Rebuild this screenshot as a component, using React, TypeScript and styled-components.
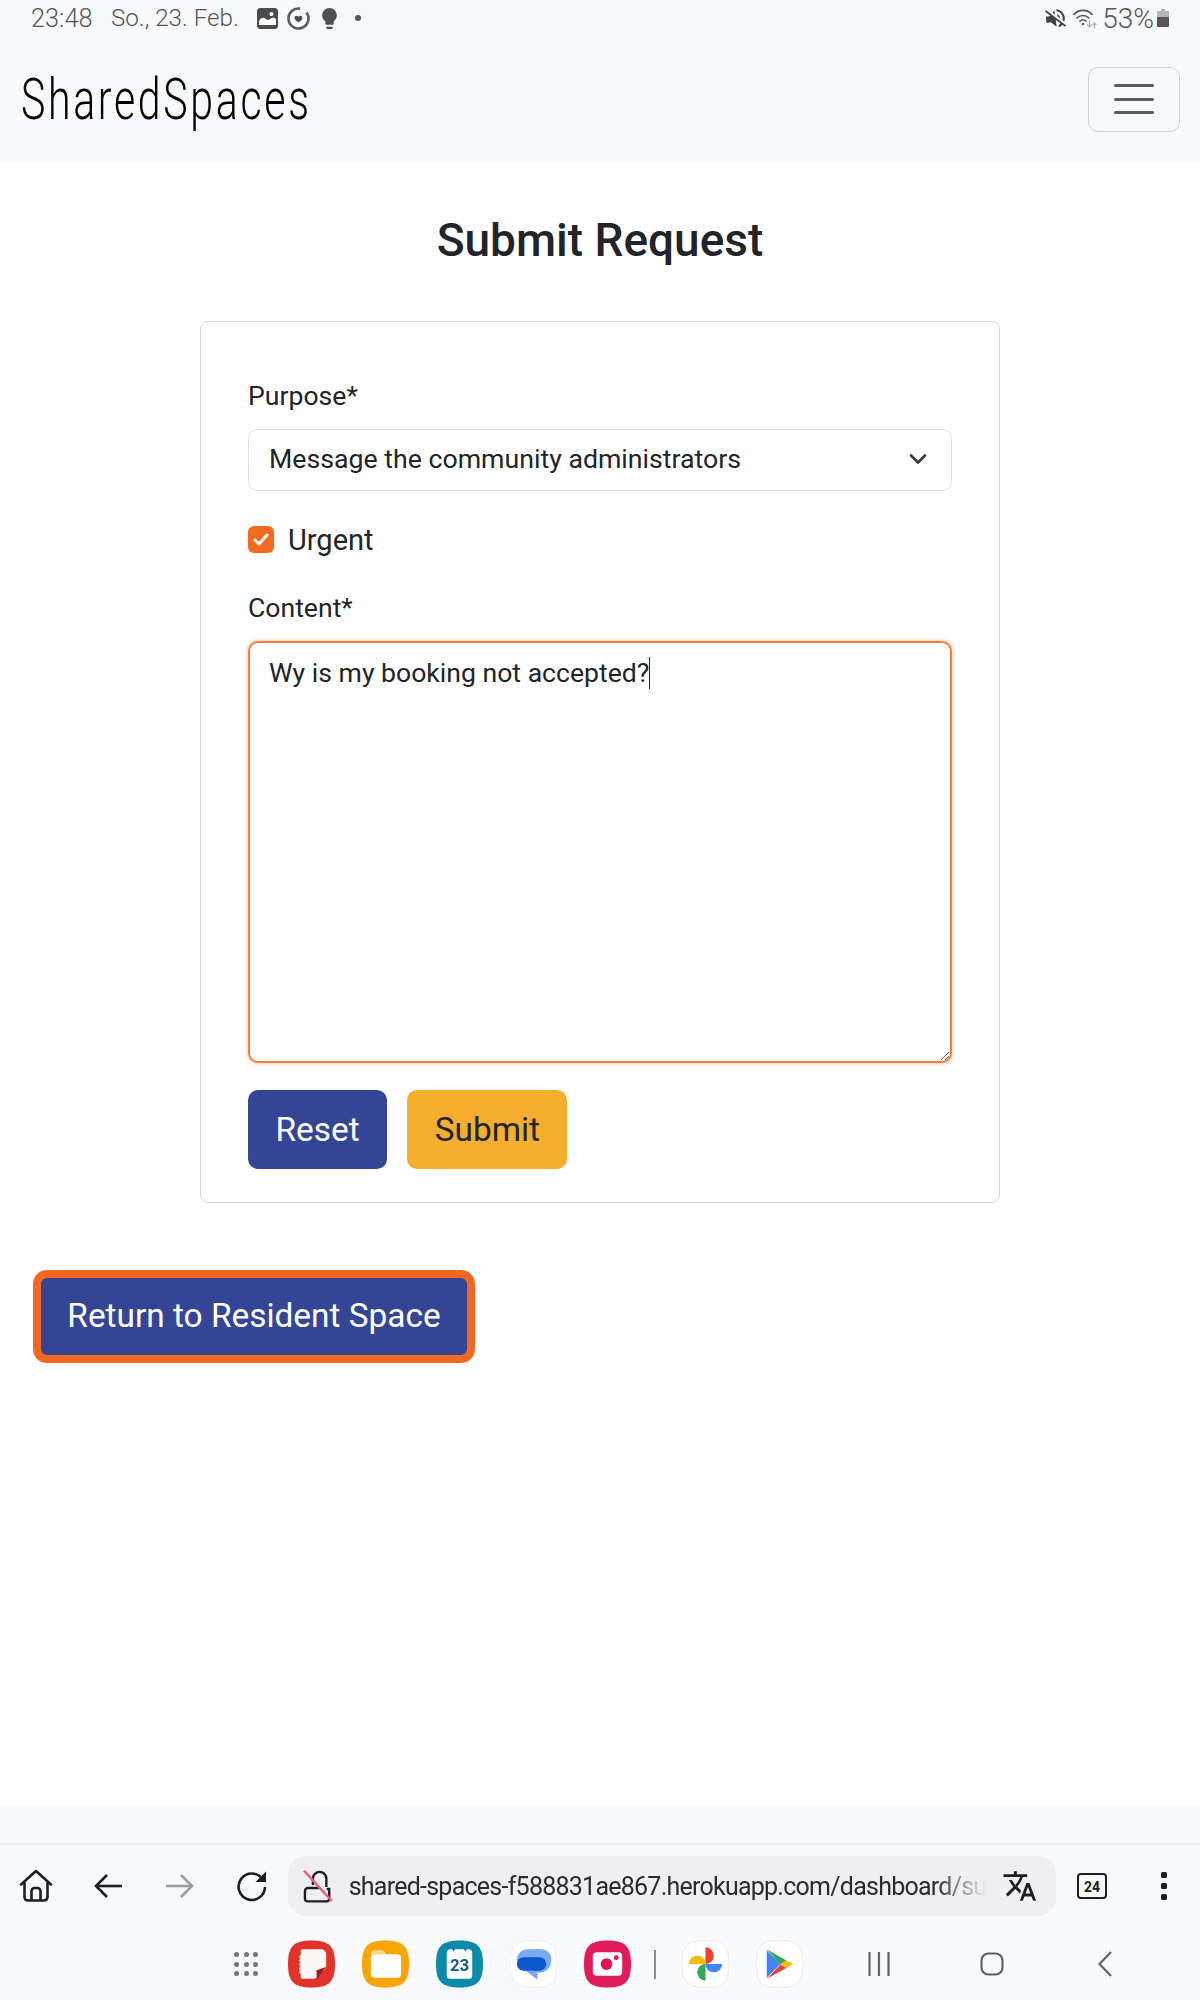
import React from "react";
import styled, { createGlobalStyle } from "styled-components";
import { MdTranslate, MdVolumeOff, MdLightbulb } from "react-icons/md";

const GlobalStyle = createGlobalStyle`
  html, body {
    margin: 0;
    padding: 0;
    background: #fff;
    font-family: Roboto, "Liberation Sans", sans-serif;
    color: #212529;
  }
  * { box-sizing: border-box; }
`;

const Page = styled.div`
  width: 1200px;
  height: 2000px;
  display: flex;
  flex-direction: column;
  overflow: hidden;
`;

const Header = styled.header`
  height: 163px;
  background: #f8f9fa;
  display: flex;
  flex-direction: column;
  flex: none;
`;

const StatusBar = styled.div`
  height: 36px;
  display: flex;
  align-items: center;
  justify-content: space-between;
  padding: 0 31px;
  color: #555657;
  font-weight: 300;
`;

const StatusGroup = styled.div`
  display: flex;
  align-items: center;
`;

const StatusText = styled.span<{ $size: number; $gap?: number }>`
  font-size: ${(p) => p.$size}px;
  margin-left: ${(p) => p.$gap ?? 0}px;
`;

const NotificationIcons = styled.div`
  display: flex;
  align-items: center;
  gap: 9px;
  margin-left: 18px;
`;

const BulbIcon = styled(MdLightbulb)`
  margin-left: -2px;
  color: #4f5051;
`;

const NotificationDot = styled.span`
  width: 6px;
  height: 6px;
  border-radius: 50%;
  background: #555657;
  margin-left: 4px;
`;

const MuteIcon = styled(MdVolumeOff)`
  color: #3f4041;
  transform: rotate(-8deg);
`;

const StatusSlot = styled.div<{ $gap: number }>`
  display: flex;
  margin-left: ${(p) => p.$gap}px;
`;

const NavRow = styled.div`
  flex: 1;
  display: flex;
  align-items: center;
  justify-content: space-between;
  padding: 0 20px 0 21px;
  margin-top: -1px;
`;

const Brand = styled.div`
  font-size: 57px;
  font-weight: 300;
  letter-spacing: 3.7px;
  line-height: 1;
  color: #000;
  transform: scaleX(0.72);
  transform-origin: left center;
  white-space: nowrap;
`;

const Toggler = styled.button`
  width: 92px;
  height: 65px;
  background: transparent;
  border: 1px solid #d1d2d3;
  border-radius: 10px;
  padding: 0;
  display: flex;
  flex-direction: column;
  align-items: center;
  justify-content: center;
  gap: 10.5px;
`;

const TogglerBar = styled.span`
  width: 40px;
  height: 3px;
  border-radius: 2px;
  background: #5a5c5e;
`;

const Main = styled.main`
  flex: 1;
  padding-top: 50px;
`;

const Title = styled.h1`
  margin: 0 0 53px;
  text-align: center;
  font-size: 46px;
  font-weight: 500;
  line-height: 55px;
`;

const Card = styled.form`
  width: 800px;
  height: 882px;
  margin: 0 auto;
  padding: 54px 47px 0;
  background: #fff;
  border: 1px solid #d6d8da;
  border-radius: 8px;
`;

const Label = styled.div`
  font-size: 26.6px;
  line-height: 39px;
  margin-bottom: 14px;
`;

const SelectBox = styled.div`
  height: 62px;
  padding: 0 24px 2px 20px;
  border: 1px solid #dee2e6;
  border-radius: 10px;
  display: flex;
  align-items: center;
  justify-content: space-between;
  font-size: 26.7px;
`;

const CheckRow = styled.div`
  display: flex;
  align-items: center;
  gap: 14px;
  margin: 29px 0 29px;
  height: 39px;
  font-size: 29px;
`;

const CheckBox = styled.span`
  width: 26px;
  height: 27px;
  border-radius: 6px;
  background: #f26b21;
  display: flex;
  align-items: center;
  justify-content: center;
`;

const ContentArea = styled.div`
  position: relative;
  height: 422px;
  padding: 10px 19px;
  border: 2px solid #f0803f;
  border-radius: 10px;
  box-shadow: 0 0 3px 1px rgba(242, 107, 33, 0.35);
  font-size: 26.6px;
  line-height: 39px;
`;

const Caret = styled.span`
  display: inline-block;
  width: 1px;
  height: 32px;
  background: #222;
  vertical-align: -7px;
`;

const ResizeGrip = styled.svg`
  position: absolute;
  right: 1px;
  bottom: 1px;
`;

const ButtonRow = styled.div`
  display: flex;
  gap: 20px;
  margin-top: 27px;
`;

const ActionButton = styled.button<{ $tone: "blue" | "amber" }>`
  height: 79px;
  padding: 0 27.5px;
  border: none;
  border-radius: 10px;
  font-family: inherit;
  font-size: 33.4px;
  background: ${(p) => (p.$tone === "blue" ? "#344596" : "#f5ae2d")};
  color: ${(p) => (p.$tone === "blue" ? "#fff" : "#212529")};
`;

const ReturnButton = styled.button`
  display: block;
  width: 442px;
  height: 93px;
  margin: 67px 0 0 33px;
  padding: 0 0 2px;
  background: #344596;
  border: 8px solid #f26722;
  border-radius: 14px;
  color: #fff;
  font-family: inherit;
  font-size: 33.4px;
`;

const Chrome = styled.footer`
  flex: none;
  height: 195px;
  background: #f8f9fb;
  display: flex;
  flex-direction: column;
`;

const TabStrip = styled.div`
  height: 40px;
  border-bottom: 2px solid #eeeff1;
`;

const Toolbar = styled.div`
  display: flex;
  align-items: center;
  margin-top: 11px;
  height: 60px;
`;

const ToolSlot = styled.div`
  width: 72px;
  height: 60px;
  display: flex;
  align-items: center;
  justify-content: center;
  flex: none;
`;

const AddressBar = styled.div`
  width: 768px;
  height: 60px;
  flex: none;
  background: #efeff3;
  border-radius: 18px;
  display: flex;
  align-items: center;
  padding: 0 18px 0 15px;
`;

const UrlText = styled.div`
  flex: 1;
  margin: 0 16px 0 16px;
  white-space: nowrap;
  font-size: 25px;
  letter-spacing: -0.75px;
  color: #2a2b2d;
  -webkit-mask-image: linear-gradient(to right, #000 92%, transparent 100%);
  mask-image: linear-gradient(to right, #000 92%, transparent 100%);
`;

const Dock = styled.div`
  flex: 1;
  display: flex;
  align-items: center;
  padding: 12px 0 0 234px;
`;

const AppGrid = styled.div`
  width: 24px;
  height: 24px;
  display: grid;
  grid-template-columns: repeat(3, 5px);
  justify-content: space-between;
  align-content: space-between;
  margin-right: 30px;
`;

const GridDot = styled.span`
  width: 5px;
  height: 5px;
  border-radius: 50%;
  background: #757678;
`;

const AppIcons = styled.div`
  display: flex;
  align-items: center;
  gap: 27px;
`;

const DockSeparator = styled.span`
  width: 2px;
  height: 29px;
  background: #8b8c8e;
  margin: 0 -1px 0 -4px;
`;

const NavKeys = styled.div`
  display: flex;
  align-items: center;
  margin-left: 65px;
`;

const NavKey = styled.div<{ $width: number }>`
  width: ${(p) => p.$width}px;
  display: flex;
  justify-content: flex-start;
`;

const ArrowSvg = styled.svg<{ $flip?: boolean }>`
  transform: ${(p) => (p.$flip ? "scaleX(-1)" : "none")};
`;

const Squircle = "M24 0C42 0 48 6 48 24S42 48 24 48 0 42 0 24 6 0 24 0Z";

const AppSvg: React.FC<{ children: React.ReactNode }> = ({ children }) => (
  <svg width="47" height="48" viewBox="0 0 48 48">
    {children}
  </svg>
);

const WifiIcon = () => (
  <svg width="24" height="21" viewBox="0 0 24 21" fill="none" stroke="#555657" strokeLinecap="round">
    <path d="M1 6.5C5.5 1 14.5 1 19 6.5" strokeWidth="1.6" />
    <path d="M4 10c3.2-3.4 8.8-3.4 12 0" strokeWidth="1.6" />
    <path d="M7 13.2c1.8-1.7 4.2-1.7 6 0" strokeWidth="1.6" />
    <circle cx="10" cy="16" r="1.3" fill="#555657" stroke="none" />
    <path d="M16.5 13v6m-2-2 2 2 2-2" stroke="#a9aaab" strokeWidth="1.2" />
    <path d="M21.5 20v-5m-1.6 1.6 1.6-1.6 1.6 1.6" stroke="#a9aaab" strokeWidth="1.2" />
  </svg>
);

const BatteryIcon = () => (
  <svg width="12" height="18" viewBox="0 0 12 18">
    <path d="M4 0h4v2h3a1 1 0 0 1 1 1v5H0V3a1 1 0 0 1 1-1h3Z" fill="#b5b6b7" />
    <path d="M0 8h12v9a1 1 0 0 1-1 1H1a1 1 0 0 1-1-1Z" fill="#555657" />
  </svg>
);

const PictureIcon = () => (
  <svg width="21" height="21" viewBox="0 0 21 21">
    <rect width="21" height="21" rx="3.5" fill="#4a4b4c" />
    <circle cx="14.5" cy="6" r="2" fill="#fff" />
    <path d="M2 17v-4c2-3 4-4 6-2.5s3 2 5 .5 4-2 6 0v6Z" fill="#fff" />
  </svg>
);

const HeartRingIcon = () => (
  <svg width="23" height="23" viewBox="0 0 23 23" fill="none">
    <path d="M13 1.600A10 10 0 1 0 19.500 5.500" stroke="#5b5c5d" strokeWidth="2.600" />
    <path d="M11.500 15.500c-2.500-1.700-4-3-4-4.700 0-2.100 2.700-2.800 4-1 1.300-1.800 4-1.100 4 1 0 1.700-1.500 3-4 4.700Z" fill="#4f5051" />
  </svg>
);

const HomeIcon = () => (
  <svg width="34" height="34" viewBox="0 0 34 34" fill="none" stroke="#1d1e20" strokeWidth="2.6" strokeLinejoin="round">
    <path d="M2 15.5 17 2l15 13.5" strokeLinecap="round" />
    <path d="M5.5 13v15a3.5 3.5 0 0 0 3.5 3.5h16a3.5 3.5 0 0 0 3.5-3.5V13" />
    <path d="M12.5 31.5V22a3 3 0 0 1 3-3h3a3 3 0 0 1 3 3v9.5" />
  </svg>
);

const ArrowIcon: React.FC<{ flip?: boolean; color: string }> = ({ flip, color }) => (
  <ArrowSvg $flip={flip} width="30" height="26" viewBox="0 0 30 26" fill="none" stroke={color} strokeWidth="2.6">
    <path d="M29 13H3" />
    <path d="M14 2 3 13l11 11" />
  </ArrowSvg>
);

const ReloadIcon = () => (
  <svg width="32" height="32" viewBox="0 0 32 32" fill="none">
    <path d="M26.5 9A13.2 13.2 0 1 0 29 17" stroke="#1d1e20" strokeWidth="2.6" />
    <path d="M30 1.5V12H19.5Z" fill="#1d1e20" />
  </svg>
);

const LockIcon = () => (
  <svg width="30" height="34" viewBox="0 0 30 34" fill="none">
    <path d="M10 16V9.5a6.8 6.8 0 0 1 13.6 0V18" stroke="#1d1e20" strokeWidth="2.4" />
    <path d="M24 20h2.5v10a2.5 2.5 0 0 1-2.5 2.5H4.5A2.5 2.5 0 0 1 2 30v-8a3 3 0 0 1 3-3h11" stroke="#1d1e20" strokeWidth="2.4" />
    <path d="M1 1.5 29 32" stroke="#ee5f70" strokeWidth="2.4" />
  </svg>
);

const TabCountIcon = () => (
  <svg width="30" height="26" viewBox="0 0 30 26">
    <rect x="1" y="1" width="28" height="24" rx="3" fill="none" stroke="#1d1e20" strokeWidth="2" />
    <text x="15" y="18.5" textAnchor="middle" fontFamily="Roboto, sans-serif" fontSize="14" fontWeight="700" fill="#1d1e20">24</text>
  </svg>
);

const MoreIcon = () => (
  <svg width="6" height="28" viewBox="0 0 6 28" fill="#1d1e20">
    <rect width="6" height="6" rx="1.5" x="0" y="0" />
    <rect width="6" height="6" rx="1.5" x="0" y="11" />
    <rect width="6" height="6" rx="1.5" x="0" y="22" />
  </svg>
);

const App: React.FC = () => {
  return (
    <Page>
      <GlobalStyle />
      <Header>
        <StatusBar>
          <StatusGroup>
            <StatusText $size={25.3}>23:48</StatusText>
            <StatusText $size={24.2} $gap={18.5}>So., 23. Feb.</StatusText>
            <NotificationIcons>
              <PictureIcon />
              <HeartRingIcon />
              <BulbIcon size={25} />
              <NotificationDot />
            </NotificationIcons>
          </StatusGroup>
          <StatusGroup>
            <MuteIcon size={25} />
            <StatusSlot $gap={5}>
              <WifiIcon />
            </StatusSlot>
            <StatusText $size={28} $gap={5}>53%</StatusText>
            <StatusSlot $gap={3}>
              <BatteryIcon />
            </StatusSlot>
          </StatusGroup>
        </StatusBar>
        <NavRow>
          <Brand>SharedSpaces</Brand>
          <Toggler type="button">
            <TogglerBar />
            <TogglerBar />
            <TogglerBar />
          </Toggler>
        </NavRow>
      </Header>

      <Main>
        <Title>Submit Request</Title>
        <Card>
          <Label>Purpose*</Label>
          <SelectBox>
            <span>Message the community administrators</span>
            <svg width="18" height="12" viewBox="0 0 18 12" fill="none" stroke="#343a40" strokeWidth="2.6" strokeLinecap="round" strokeLinejoin="round">
              <path d="m2 2.5 7 7 7-7" />
            </svg>
          </SelectBox>
          <CheckRow>
            <CheckBox>
              <svg width="16" height="13" viewBox="0 0 16 13" fill="none" stroke="#fff" strokeWidth="3" strokeLinecap="round" strokeLinejoin="round">
                <path d="m2 7 4 4 8-9" />
              </svg>
            </CheckBox>
            <span>Urgent</span>
          </CheckRow>
          <Label>Content*</Label>
          <ContentArea>
            Wy is my booking not accepted?<Caret />
            <ResizeGrip width="9" height="9" viewBox="0 0 9 9" stroke="#777" strokeWidth="1">
              <path d="M1 9 9 1M5 9l4-4" />
            </ResizeGrip>
          </ContentArea>
          <ButtonRow>
            <ActionButton type="button" $tone="blue">Reset</ActionButton>
            <ActionButton type="button" $tone="amber">Submit</ActionButton>
          </ButtonRow>
        </Card>
        <ReturnButton type="button">Return to Resident Space</ReturnButton>
      </Main>

      <Chrome>
        <TabStrip />
        <Toolbar>
          <ToolSlot><HomeIcon /></ToolSlot>
          <ToolSlot><ArrowIcon color="#1d1e20" /></ToolSlot>
          <ToolSlot><ArrowIcon color="#9c9d9f" flip /></ToolSlot>
          <ToolSlot><ReloadIcon /></ToolSlot>
          <AddressBar>
            <LockIcon />
            <UrlText>shared-spaces-f588831ae867.herokuapp.com/dashboard/su</UrlText>
            <MdTranslate size={36} color="#1d1e20" />
          </AddressBar>
          <ToolSlot><TabCountIcon /></ToolSlot>
          <ToolSlot><MoreIcon /></ToolSlot>
        </Toolbar>
        <Dock>
          <AppGrid>
            {Array.from({ length: 9 }).map((_, i) => (
              <GridDot key={i} />
            ))}
          </AppGrid>
          <AppIcons>
            <AppSvg>
              <path d={Squircle} fill="#e0332b" />
              <path d="M13 11a2 2 0 0 1 2-2h19a5 5 0 0 1 5 5v12a5 5 0 0 1-1.5 3.5l-8 8a5 5 0 0 1-3.5 1.5H15a2 2 0 0 1-2-2v-3l-2-1.5 2-2-2-2 2-2-2-2 2-2-2-2 2-2-2-2 2-2Z" fill="#fbf7f5" />
              <path d="M29 30.5 39 27l-9.5 12.5Z" fill="#9d1f1a" />
            </AppSvg>
            <AppSvg>
              <path d={Squircle} fill="#f8a606" />
              <path d="M9 14a4 4 0 0 1 4-4h7a4 4 0 0 1 3 1.5l2 2.5H9Z" fill="#fcd98a" />
              <rect x="9" y="14" width="31" height="24" rx="4" fill="#fff" />
            </AppSvg>
            <AppSvg>
              <path d={Squircle} fill="#0c8aa9" />
              <path d="M11 13a4 4 0 0 1 4-4h1.500l1.500 2.500L19.500 9h9l1.500 2.500L31.500 9H33a4 4 0 0 1 4 4v23a3 3 0 0 1-3 3H14a3 3 0 0 1-3-3Z" fill="#fff" />
              <text x="24" y="31" textAnchor="middle" fontFamily="Roboto, sans-serif" fontSize="17" fontWeight="700" fill="#145c86">23</text>
            </AppSvg>
            <AppSvg>
              <path d={Squircle} fill="#fff" stroke="#ecedf0" strokeWidth="1" />
              <path d="M18 9h14a10 10 0 0 1 10 12 12 12 0 0 1-12 12h-2v7L16 31A12 12 0 0 1 7 20 11 11 0 0 1 18 9Z" fill="#7ba9f6" />
              <rect x="7" y="17" width="30" height="14" rx="7" fill="#0b57d0" />
            </AppSvg>
            <AppSvg>
              <path d={Squircle} fill="#e11b59" />
              <rect x="9" y="12" width="30" height="24" rx="4" fill="#fff" />
              <circle cx="23" cy="24" r="6" fill="#d9175a" />
              <circle cx="33" cy="17.500" r="2.500" fill="#d9175a" />
            </AppSvg>
            <DockSeparator />
            <AppSvg>
              <path d={Squircle} fill="#fff" stroke="#e6e7ea" strokeWidth="1" />
              <path d="M24 24V7a8.500 8.500 0 0 1 0 17Z" fill="#ea4335" />
              <path d="M24 24H7a8.500 8.500 0 0 1 17 0Z" fill="#fbbc04" />
              <path d="M24 24h17a8.500 8.500 0 0 1-17 0Z" fill="#4285f4" />
              <path d="M24 24v17a8.500 8.500 0 0 1 0-17Z" fill="#34a853" />
            </AppSvg>
            <AppSvg>
              <path d={Squircle} fill="#fff" stroke="#e6e7ea" strokeWidth="1" />
              <path d="M11 10v28l14-14Z" fill="#4285f4" />
              <path d="M11 9 31 20.500 25 24.500Z" fill="#34a853" />
              <path d="M31 20.500 38 24l-7 4-6-4Z" fill="#fbbc04" />
              <path d="M11 39 25 24.500l6 3.500Z" fill="#ea4335" />
            </AppSvg>
          </AppIcons>
          <NavKeys>
            <NavKey $width={112}>
              <svg width="22" height="24" viewBox="0 0 22 24" stroke="#616264" strokeWidth="2.2">
                <path d="M1.500 0v24M11 0v24M20.500 0v24" />
              </svg>
            </NavKey>
            <NavKey $width={118}>
              <svg width="24" height="24" viewBox="0 0 24 24" fill="none" stroke="#616264" strokeWidth="2.2">
                <rect x="1.500" y="1.500" width="21" height="21" rx="7" />
              </svg>
            </NavKey>
            <NavKey $width={14}>
              <svg width="14" height="26" viewBox="0 0 14 26" fill="none" stroke="#616264" strokeWidth="2.2">
                <path d="M13 1 1.500 13 13 25" />
              </svg>
            </NavKey>
          </NavKeys>
        </Dock>
      </Chrome>
    </Page>
  );
};

export default App;
